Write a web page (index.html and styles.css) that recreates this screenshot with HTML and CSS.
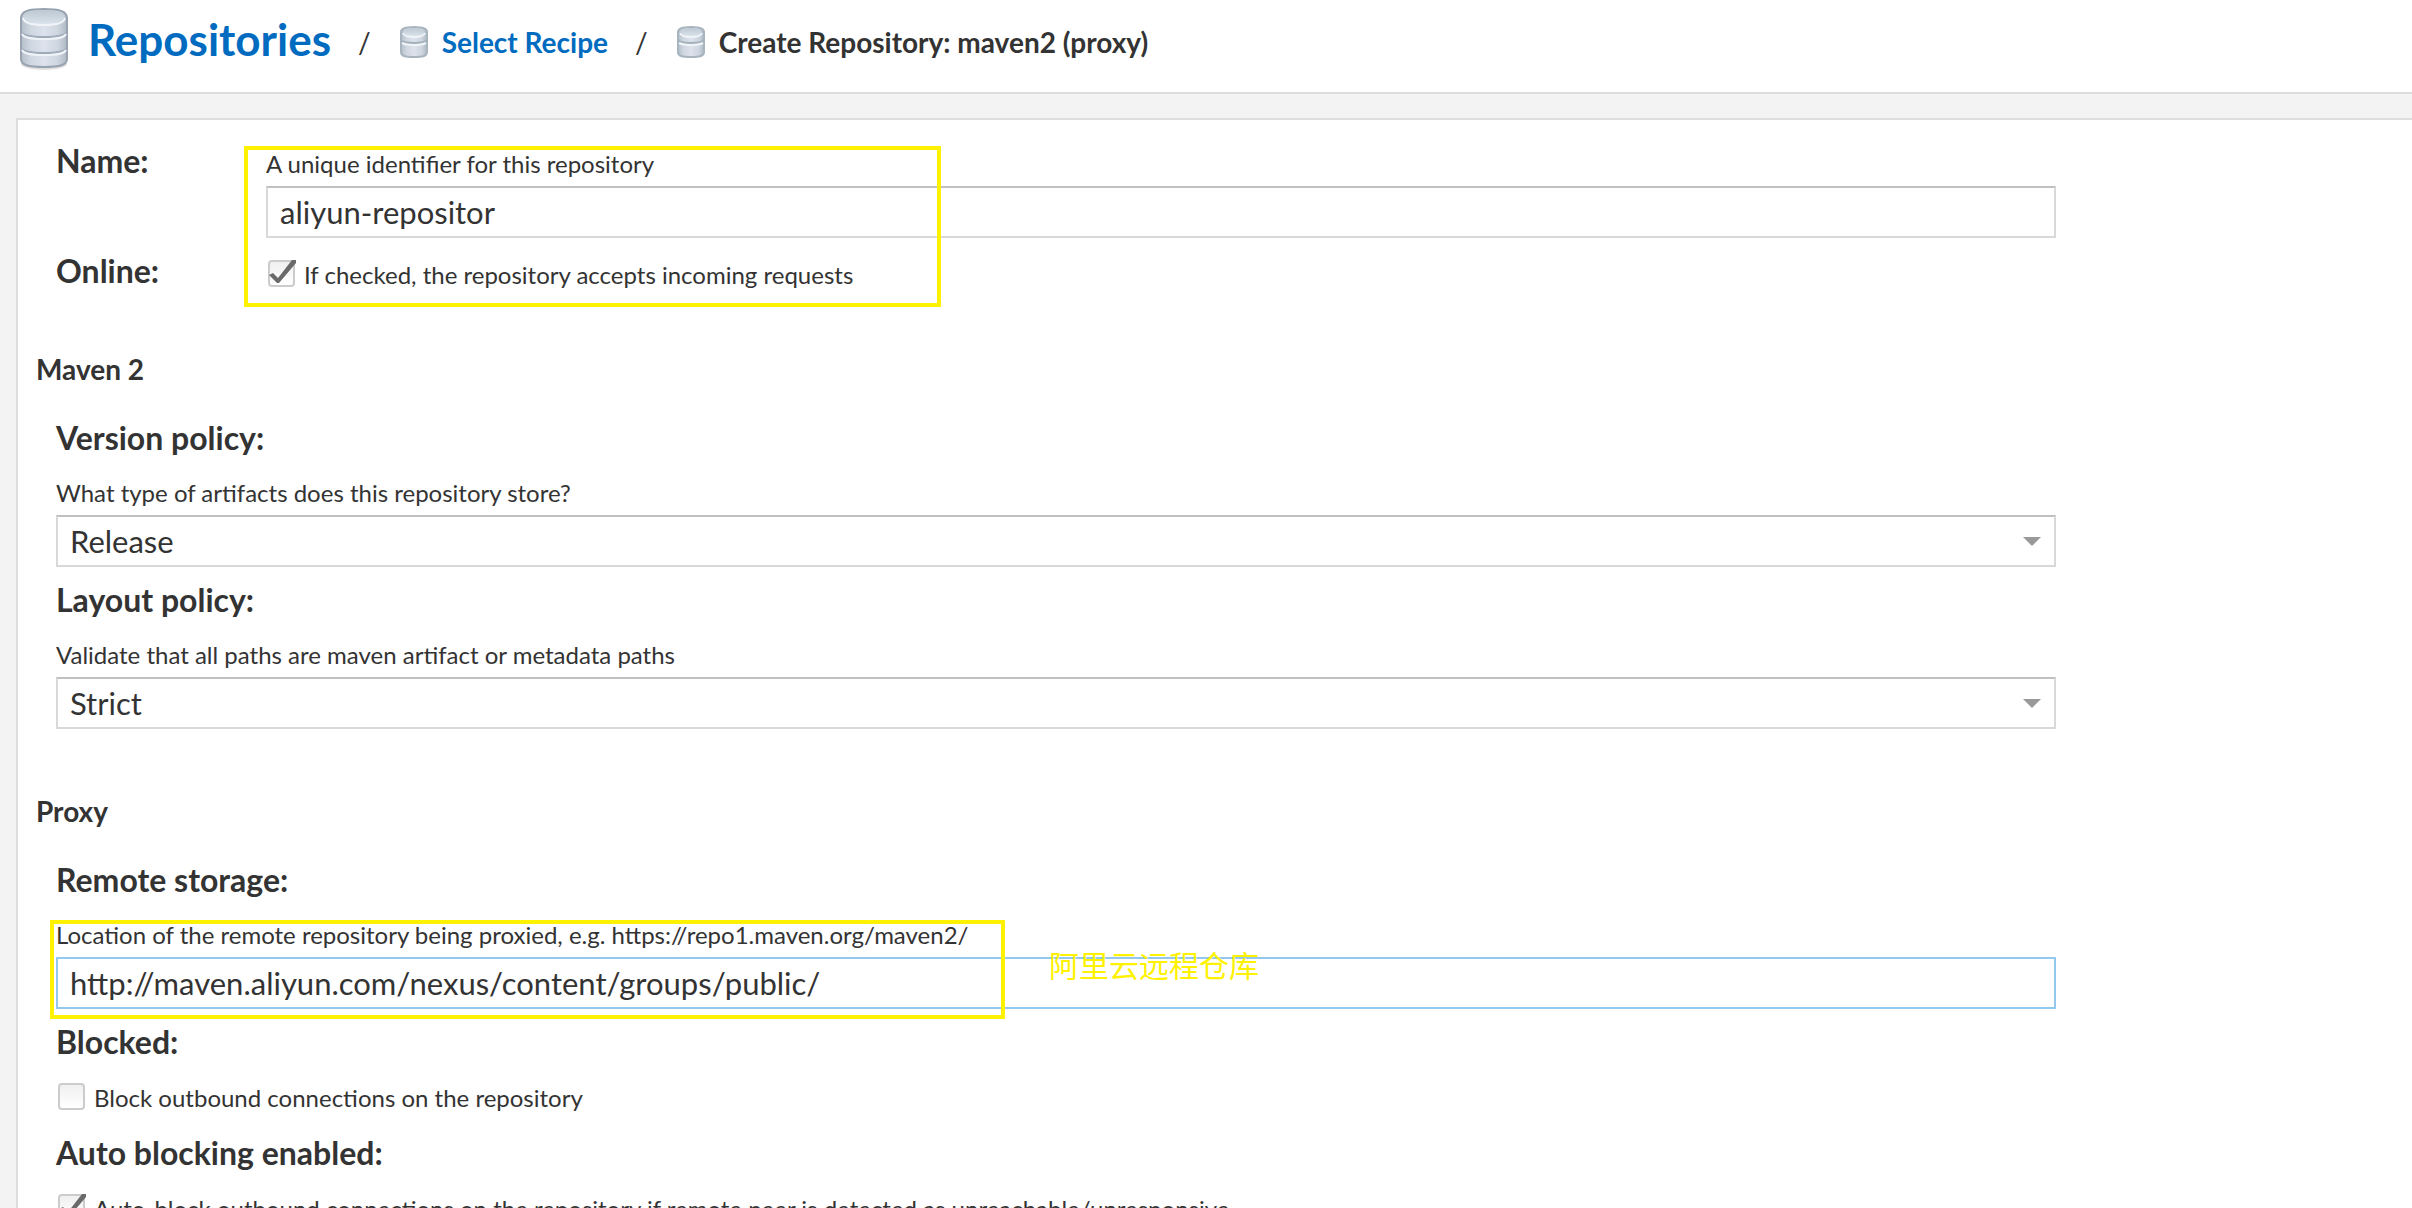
FILE: index.html
```html
<!DOCTYPE html>
<html lang="en">
<head>
  <meta charset="UTF-8">
  <meta name="viewport" content="width=device-width, initial-scale=1.0">
  <title>Create Repository: maven2 (proxy)</title>
  <link rel="stylesheet" href="styles.css">
</head>
<body>
  <!-- shared icon shapes -->
  <svg class="sprite" aria-hidden="true">
    <defs>
      <linearGradient id="bodyFill" x1="0" x2="1" y1="0" y2="0">
        <stop offset="0" stop-color="#b4bfca"/>
        <stop offset="0.2" stop-color="#ced6e0"/>
        <stop offset="0.5" stop-color="#dde2ec"/>
        <stop offset="0.8" stop-color="#ced6e0"/>
        <stop offset="1" stop-color="#aeb9c4"/>
      </linearGradient>
      <linearGradient id="lidFill" x1="0" x2="0" y1="0" y2="1">
        <stop offset="0" stop-color="#bcc8d2"/>
        <stop offset="1" stop-color="#d9e2ea"/>
      </linearGradient>
      <symbol id="db-large" viewBox="0 0 52 64">
        <ellipse cx="26" cy="57" rx="23" ry="6" fill="#000" opacity="0.12"/>
        <path d="M3 11C3 4 11 2 26 2s23 2 23 9v41c0 6-7 8-23 8S3 58 3 52z" fill="url(#bodyFill)" stroke="#97a4b0" stroke-width="2"/>
        <ellipse cx="26" cy="10" rx="21" ry="7" fill="url(#lidFill)"/>
        <path d="M5 11c1 5 8 7 21 7s20-2 21-7" fill="none" stroke="#f0f4f8" stroke-width="2"/>
        <path d="M3 25c2 4 9 5 23 5s21-1 23-5M3 41c2 4 9 5 23 5s21-1 23-5" fill="none" stroke="#9eabb7" stroke-width="2"/>
        <path d="M4 27c2 4 9 5 22 5s20-1 22-5M4 43c2 4 9 5 22 5s20-1 22-5" fill="none" stroke="#f0f4f8" stroke-width="2"/>
      </symbol>
      <symbol id="db-small" viewBox="0 0 32 32">
        <path d="M3 6c0-3 3-5 13-5s13 2 13 5v20c0 4-4 5-13 5S3 30 3 26z" fill="url(#bodyFill)" stroke="#a8b4be" stroke-width="2"/>
        <ellipse cx="16" cy="6" rx="10" ry="4" fill="url(#lidFill)"/>
        <path d="M5 7c1 3 4 4 11 4s10-1 11-4" fill="none" stroke="#f0f4f8" stroke-width="2"/>
        <path d="M3 15c2 1 5 2 13 2s11-1 13-2" fill="none" stroke="#a3afba" stroke-width="2"/>
        <path d="M4 17c2 1 5 2 12 2s10-1 12-2" fill="none" stroke="#f0f4f8" stroke-width="2"/>
      </symbol>
      <symbol id="tick" viewBox="0 0 32 32">
        <path d="M3 16l4-2 5 5L26 1h4v3L13 24h-2z" fill="#6a6a6a"/>
      </symbol>
    </defs>
  </svg>

  <header class="topbar">
    <nav class="breadcrumb">
      <a class="crumb crumb-root" href="#">
        <svg class="icon-large" aria-hidden="true"><use href="#db-large"/></svg>
        Repositories
      </a>
      <span class="slash">/</span>
      <a class="crumb" href="#">
        <svg class="icon-small" aria-hidden="true"><use href="#db-small"/></svg>
        Select Recipe
      </a>
      <span class="slash">/</span>
      <span class="crumb crumb-current">
        <svg class="icon-small" aria-hidden="true"><use href="#db-small"/></svg>
        Create Repository: maven2 (proxy)
      </span>
    </nav>
  </header>

  <main class="panel">
    <form class="form">
      <div class="group group-main">
        <div class="field field-inline">
          <label class="field-label" for="name">Name:</label>
          <div class="field-body">
            <p class="help">A unique identifier for this repository</p>
            <input class="text-input" id="name" type="text" value="aliyun-repositor">
          </div>
        </div>
        <div class="field field-inline">
          <span class="field-label">Online:</span>
          <label class="check">
            <span class="check-box">
              <input type="checkbox" checked>
              <svg class="tick" aria-hidden="true"><use href="#tick"/></svg>
            </span>
            If checked, the repository accepts incoming requests
          </label>
        </div>
        <div class="highlight highlight-main"></div>
      </div>

      <section class="section">
        <h2 class="section-title">Maven 2</h2>
        <div class="group">
          <div class="field">
            <label class="field-label" for="version">Version policy:</label>
            <p class="help">What type of artifacts does this repository store?</p>
            <div class="select-wrap">
              <select class="text-input" id="version">
                <option>Release</option>
                <option>Snapshot</option>
                <option>Mixed</option>
              </select>
              <svg class="arrow" viewBox="0 0 18 9" aria-hidden="true"><path d="M0 0h18L9 9z"/></svg>
            </div>
          </div>
          <div class="field">
            <label class="field-label" for="layout">Layout policy:</label>
            <p class="help">Validate that all paths are maven artifact or metadata paths</p>
            <div class="select-wrap">
              <select class="text-input" id="layout">
                <option>Strict</option>
                <option>Permissive</option>
              </select>
              <svg class="arrow" viewBox="0 0 18 9" aria-hidden="true"><path d="M0 0h18L9 9z"/></svg>
            </div>
          </div>
        </div>
      </section>

      <section class="section">
        <h2 class="section-title">Proxy</h2>
        <div class="group">
          <div class="field field-remote">
            <label class="field-label" for="remote">Remote storage:</label>
            <p class="help">Location of the remote repository being proxied, e.g. https://repo1.maven.org/maven2/</p>
            <input class="text-input active" id="remote" type="text" value="http://maven.aliyun.com/nexus/content/groups/public/">
            <div class="highlight highlight-remote"></div>
            <span class="note" lang="zh">阿里云远程仓库</span>
          </div>
          <div class="field">
            <span class="field-label">Blocked:</span>
            <label class="check">
              <span class="check-box">
                <input type="checkbox">
              </span>
              Block outbound connections on the repository
            </label>
          </div>
          <div class="field">
            <span class="field-label">Auto blocking enabled:</span>
            <label class="check">
              <span class="check-box">
                <input type="checkbox" checked>
                <svg class="tick" aria-hidden="true"><use href="#tick"/></svg>
              </span>
              Auto-block outbound connections on the repository if remote peer is detected as unreachable/unresponsive
            </label>
          </div>
        </div>
      </section>
    </form>
  </main>
</body>
</html>
```
FILE: styles.css
```css
* {
  box-sizing: border-box;
}

body {
  margin: 0;
  height: 100vh;
  overflow: hidden;
  display: flex;
  flex-direction: column;
  font-family: Lato, "Noto Sans CJK SC", sans-serif;
  font-size: 24px;
  color: #333;
  background: #f3f3f3;
}

.sprite {
  position: absolute;
  width: 0;
  height: 0;
}

/* header */
.topbar {
  flex: none;
  height: 94px;
  padding: 0 18px;
  background: #fff;
  border-bottom: 2px solid #ddd;
}

.breadcrumb {
  display: flex;
  align-items: center;
  height: 84px;
}

.crumb {
  display: flex;
  align-items: center;
  gap: 12px;
  font-size: 28px;
  font-weight: bold;
  color: #006bbf;
  text-decoration: none;
}

.crumb-root {
  gap: 18px;
  padding-bottom: 6px;
  font-size: 44px;
}

.crumb-current {
  color: #333;
}

.slash {
  padding: 0 27px;
  font-size: 28px;
}

.icon-large {
  width: 52px;
  height: 64px;
}

.icon-small {
  width: 32px;
  height: 32px;
}

/* form */
.panel {
  flex: 1;
  min-height: 0;
  margin: 24px 0 0 16px;
  padding: 18px 0 0 18px;
  background: #fff;
  border: 2px solid #ddd;
  border-width: 2px 0 0 2px;
  overflow: hidden;
}

.form {
  width: 85%;
}

.group {
  padding-left: 20px;
}

.group-main {
  position: relative;
}

.section {
  padding-top: 52px;
}

.section-title {
  margin: 0 0 26px;
  font-size: 28px;
  line-height: 40px;
}

.field {
  padding-bottom: 10px;
}

.field-inline {
  display: grid;
  grid-template-columns: 210px 1fr;
}

.field-inline + .field-inline {
  padding-bottom: 3px;
}

.field-label {
  display: block;
  font-size: 32px;
  font-weight: bold;
  line-height: 46px;
}

.help {
  margin: 18px 0 8px;
  line-height: 28px;
}

.field-body .help {
  margin-top: 12px;
}

.text-input {
  display: block;
  width: 100%;
  height: 52px;
  padding: 0 12px;
  font: inherit;
  font-size: 31px;
  color: #333;
  background: #fff;
  border: 2px solid #d9d9d9;
  border-top-color: #c0c0c0;
  border-radius: 0;
  outline: none;
  appearance: none;
}

.text-input.active {
  border-color: #93c8ef;
}

.select-wrap {
  position: relative;
}

.arrow {
  position: absolute;
  top: 22px;
  right: 15px;
  width: 18px;
  height: 9px;
  fill: #999;
  pointer-events: none;
}

.check {
  display: flex;
  align-items: center;
  gap: 8px;
  height: 28px;
  margin: 18px 0 9px;
}

.field-inline .check {
  margin: 12px 0 0;
}

.check-box {
  position: relative;
  width: 30px;
  height: 30px;
}

.check-box input {
  display: block;
  width: 27px;
  height: 27px;
  margin: 1px 2px;
  appearance: none;
  background: linear-gradient(#f0f0f0, #fff);
  border: 2px solid #ccc;
  border-radius: 4px;
}

.tick {
  position: absolute;
  top: 0;
  left: 0;
  width: 32px;
  height: 32px;
  pointer-events: none;
}

/* marker boxes and note */
.highlight {
  position: absolute;
  border: 4px solid #fff200;
  pointer-events: none;
}

.highlight-main {
  top: 8px;
  left: 208px;
  width: 697px;
  height: 161px;
}

.field-remote {
  position: relative;
}

.highlight-remote {
  top: 63px;
  left: -6px;
  width: 955px;
  height: 99px;
}

.note {
  position: absolute;
  top: 86px;
  left: 993px;
  font-size: 30px;
  line-height: 44px;
  color: #fff200;
}
```
